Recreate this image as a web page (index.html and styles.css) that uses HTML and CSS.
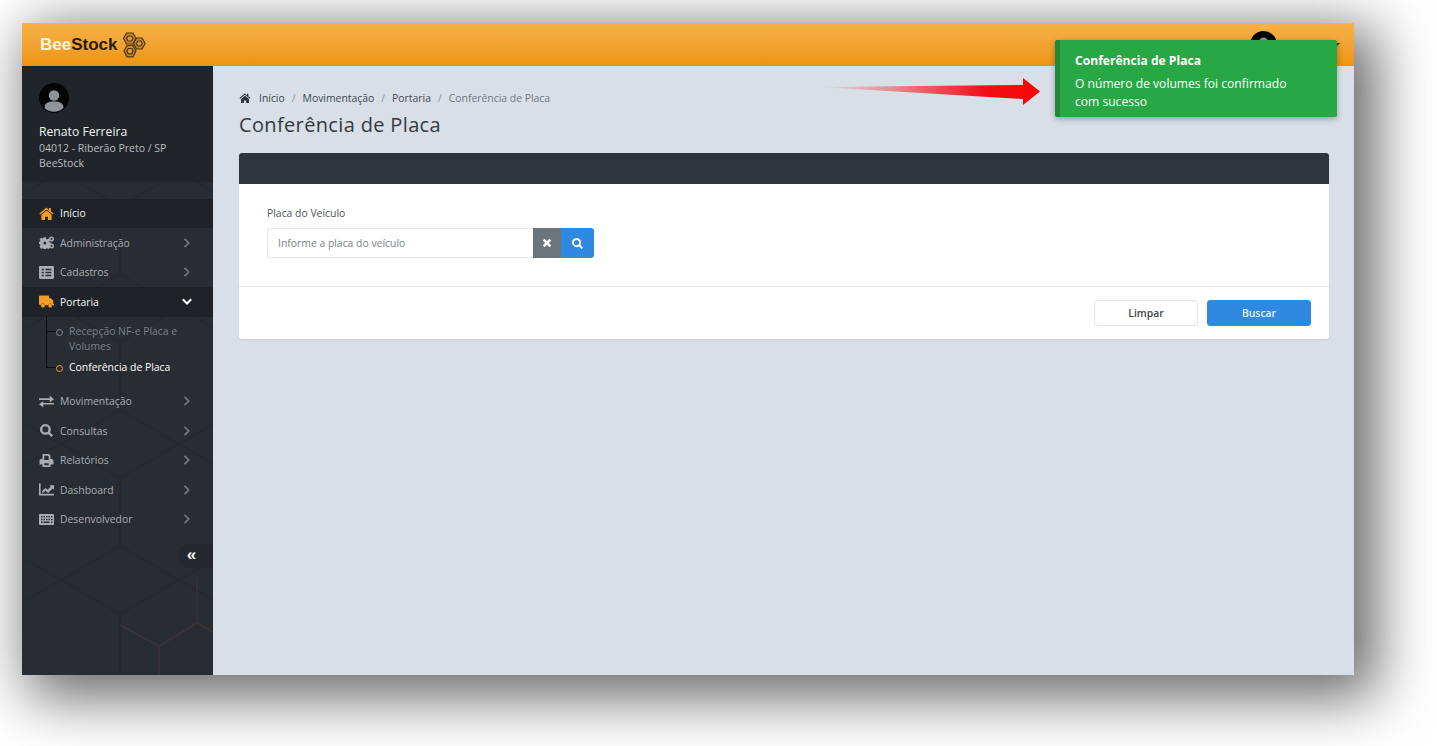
FILE: index.html
```html
<!DOCTYPE html>
<html lang="pt-BR">
<head>
    <meta charset="UTF-8">
    <title>BeeStock - Conferência de Placa</title>
    <link rel="stylesheet" href="styles.css">
</head>
<body>
    <svg class="icon-defs" width="0" height="0">
        <symbol id="i-user" viewBox="0 0 30 30">
            <circle cx="15" cy="15" r="15" fill="#050505"/>
            <circle cx="15" cy="12.5" r="5.2" fill="#8f9499"/>
            <path d="M5.5 25c0-5 3.5-6.5 9.5-6.5s9.500 1.500 9.500 6.500a14 14 0 0 1-19 0z" fill="#8f9499"/>
        </symbol>
        <symbol id="i-home" viewBox="0 0 16 14">
            <path d="M8 0.500 0.300 7l1 1.200L8 2.600l6.700 5.600 1-1.200-3-2.500V1.200h-2v2.200z"/>
            <path d="M8 3.800 2.500 8.400V14h4v-3.500h3V14h4V8.400z"/>
        </symbol>
        <symbol id="i-cogs" viewBox="0 0 16 13">
            <path d="M5 1h2.400l.3 1.700 1 .5 1.500-.9 1.600 1.600-.9 1.400.4 1.100 1.700.3v2.400l-1.700.3-.4 1 .9 1.500-1.600 1.600-1.500-.9-1 .4-.3 1.700H5l-.3-1.700-1-.4-1.500.9L.6 10.900l.9-1.500-.4-1L0 8.100V5.700l1.100-.3.400-1.100-.9-1.400 1.600-1.600 1.500.9 1-.5z"/>
            <circle cx="13.300" cy="2.700" r="1.900" fill="none" stroke="currentColor" stroke-width="1.600"/>
            <circle cx="13.300" cy="10.300" r="1.900" fill="none" stroke="currentColor" stroke-width="1.600"/>
            <circle cx="6.200" cy="6.900" r="1.600" fill="#282c33"/>
        </symbol>
        <symbol id="i-list" viewBox="0 0 14 12">
            <path fill-rule="evenodd" d="M1 0h12a1 1 0 0 1 1 1v10a1 1 0 0 1-1 1H1a1 1 0 0 1-1-1V1a1 1 0 0 1 1-1zm1.500 2.500V4h2V2.500zm0 2.800v1.500h2V5.300zm0 2.700v1.500h2V8zm3.500-5.500V4h5.500V2.500zm0 2.800v1.500h5.500V5.300zM6 8v1.500h5.500V8z"/>
        </symbol>
        <symbol id="i-truck" viewBox="0 0 16 13">
            <path d="M1.500 0h7.800A1.500 1.500 0 0 1 10.800 1.500V3h1.900l2.500 2.600V9h.8v1.500h-1.900a2.200 2.200 0 0 0-4.300 0H6.400a2.200 2.200 0 0 0-4.300 0H1.500A1.500 1.500 0 0 1 0 9V1.500A1.500 1.500 0 0 1 1.500 0z"/>
            <circle cx="4.200" cy="11" r="2"/><circle cx="11.900" cy="11" r="2"/>
        </symbol>
        <symbol id="i-exchange" viewBox="0 0 14 11">
            <path d="M0 2.500h10V0l4 3.300-4 3.200V4H0zM14 6.900H4V5L0 8.100l4 2.900V8.400h10z"/>
        </symbol>
        <symbol id="i-search" viewBox="0 0 14 14">
            <path fill-rule="evenodd" d="M5.800 0a5.800 5.800 0 0 1 4.900 8.900l3.300 3.300-1.800 1.800-3.300-3.300A5.800 5.800 0 1 1 5.800 0zm0 2.500a3.300 3.300 0 1 0 0 6.600 3.300 3.300 0 0 0 0-6.600z"/>
        </symbol>
        <symbol id="i-print" viewBox="0 0 14 13">
            <path fill-rule="evenodd" d="M3 0h6.500L11 1.500V5h1.300A1.700 1.700 0 0 1 14 6.700V10.500h-3V13H3v-2.500H0V6.700A1.700 1.700 0 0 1 1.700 5H3zm1.800 1.800V6h4.400V2.500L8.500 1.800zm0 7.400v2h4.400v-2z"/>
        </symbol>
        <symbol id="i-chart" viewBox="0 0 14 11">
            <path d="M0 0h1.500v9.500H14V11H0z"/>
            <path d="M2.500 7.500 5.800 4l2.400 1.800L11 2.800 9.700 1.500H14v4.300l-1.200-1.300-4.300 4.200L6 6.700 3.700 8.800z"/>
        </symbol>
        <symbol id="i-keyboard" viewBox="0 0 15 11">
            <path fill-rule="evenodd" d="M1 0h13a1 1 0 0 1 1 1v9a1 1 0 0 1-1 1H1a1 1 0 0 1-1-1V1a1 1 0 0 1 1-1zm1 2v1.500h1.500V2zm2.500 0v1.500H6V2zM7 2v1.500h1.500V2zm2.500 0v1.500H11V2zM12 2v1.500h1.500V2zM2 4.700v1.500h1.500V4.700zm2.500 0v1.500H6V4.700zm2.500 0v1.500h1.500V4.700zm2.500 0v1.500H11V4.700zm2.500 0v1.500h1.500V4.700zM2 7.500V9h1.500V7.500zm2.500 0V9h6V7.500zm7.500 0V9h1.500V7.500z"/>
        </symbol>
        <symbol id="i-times" viewBox="0 0 10 10">
            <path d="M0.800 2.600 2.600 0.800 5 3.200 7.400 0.800 9.200 2.600 6.800 5 9.200 7.400 7.400 9.200 5 6.800 2.600 9.200 0.800 7.400 3.200 5z"/>
        </symbol>
        <symbol id="i-right" viewBox="0 0 7 10">
            <path d="M1.500 0.800 5.700 5 1.500 9.200" fill="none" stroke="currentColor" stroke-width="1.700"/>
        </symbol>
        <symbol id="i-down" viewBox="0 0 10 7">
            <path d="M0.800 1.300 5 5.500 9.200 1.300" fill="none" stroke="currentColor" stroke-width="2"/>
        </symbol>
    </svg>

    <div class="app">
        <header class="topbar">
            <div class="logo">
                <span class="logo-text"><span class="logo-bee">Bee</span>Stock</span>
                <svg class="logo-mark" viewBox="0 0 26 26" fill="#c8862a" stroke="#4a3413" stroke-width="1.200">
                    <path d="M6.500 1 13 1 16 6.500 13 12 6.500 12 3.500 6.500z"/>
                    <path d="M16.500 6 22 6 25.200 11.500 22 17 16.500 17 13.500 11.500z"/>
                    <path d="M7 13.500 13 13.500 16 19 13 24.800 7 24.800 4 19z"/>
                    <path d="M8 4 11.500 4 13 6.500 11.500 9 8 9 6.500 6.500z" fill="#dd9a3a"/>
                    <path d="M17.800 9 20.800 9 22.300 11.500 20.800 14 17.800 14 16.300 11.500z" fill="#dd9a3a"/>
                    <path d="M8.300 16.500 11.700 16.500 13.200 19 11.700 21.800 8.300 21.800 6.800 19z" fill="#dd9a3a"/>
                </svg>
            </div>
            <div class="top-user">
                <svg class="top-avatar"><use href="#i-user"/></svg>
                <span class="top-caret"></span>
            </div>
        </header>

        <div class="main">
            <aside class="sidebar">
                <svg class="hex-bg" width="191" height="609">
                    <defs>
                        <pattern id="hex" width="118" height="136" patternUnits="userSpaceOnUse" x="-20" y="-30">
                            <path d="M59 0 118 34V102L59 136 0 102V34z" fill="none" stroke="#000000" stroke-opacity=".07" stroke-width="2"/>
                        </pattern>
                    </defs>
                    <rect width="191" height="609" fill="url(#hex)"/>
                    <path d="M175 510V557L137 580V609M137 580 98 559M175 557 191 566" fill="none" stroke="#5a3f3a" stroke-opacity=".4" stroke-width="1.500"/>
                </svg>

                <div class="profile">
                    <svg class="avatar"><use href="#i-user"/></svg>
                    <div class="profile-name">Renato Ferreira</div>
                    <div class="profile-info">04012 - Riberão Preto / SP<br>BeeStock</div>
                </div>

                <nav class="menu">
                    <a class="menu-item active-home"><svg class="menu-icon"><use href="#i-home"/></svg><span>Início</span></a>
                    <a class="menu-item"><svg class="menu-icon"><use href="#i-cogs"/></svg><span>Administração</span><svg class="chevron"><use href="#i-right"/></svg></a>
                    <a class="menu-item"><svg class="menu-icon"><use href="#i-list"/></svg><span>Cadastros</span><svg class="chevron"><use href="#i-right"/></svg></a>
                    <a class="menu-item open"><svg class="menu-icon"><use href="#i-truck"/></svg><span>Portaria</span><svg class="chevron-down"><use href="#i-down"/></svg></a>
                    <ul class="submenu">
                        <li>Recepção NF-e Placa e Volumes</li>
                        <li class="current">Conferência de Placa</li>
                    </ul>
                    <a class="menu-item"><svg class="menu-icon"><use href="#i-exchange"/></svg><span>Movimentação</span><svg class="chevron"><use href="#i-right"/></svg></a>
                    <a class="menu-item"><svg class="menu-icon"><use href="#i-search"/></svg><span>Consultas</span><svg class="chevron"><use href="#i-right"/></svg></a>
                    <a class="menu-item"><svg class="menu-icon"><use href="#i-print"/></svg><span>Relatórios</span><svg class="chevron"><use href="#i-right"/></svg></a>
                    <a class="menu-item"><svg class="menu-icon"><use href="#i-chart"/></svg><span>Dashboard</span><svg class="chevron"><use href="#i-right"/></svg></a>
                    <a class="menu-item"><svg class="menu-icon"><use href="#i-keyboard"/></svg><span>Desenvolvedor</span><svg class="chevron"><use href="#i-right"/></svg></a>
                </nav>

                <div class="collapse-row"><button class="collapse-btn">«</button></div>
            </aside>

            <main class="content">
                <div class="breadcrumb">
                    <svg class="crumb-home"><use href="#i-home"/></svg>
                    <span>Início</span><i>/</i><span>Movimentação</span><i>/</i><span>Portaria</span><i>/</i><span class="crumb-last">Conferência de Placa</span>
                </div>
                <h1 class="page-title">Conferência de Placa</h1>

                <section class="card">
                    <div class="card-head"></div>
                    <div class="card-body">
                        <label class="field-label">Placa do Veículo</label>
                        <div class="input-row">
                            <input class="plate-input" type="text" placeholder="Informe a placa do veículo">
                            <button class="btn-clear"><svg class="btn-icon-x"><use href="#i-times"/></svg></button>
                            <button class="btn-search"><svg class="btn-icon"><use href="#i-search"/></svg></button>
                        </div>
                    </div>
                    <div class="card-foot">
                        <button class="btn btn-light">Limpar</button>
                        <button class="btn btn-blue">Buscar</button>
                    </div>
                </section>
            </main>
        </div>
    </div>

    <!-- seta vermelha apontando para o aviso -->
    <svg class="arrow" width="222" height="30" viewBox="0 0 222 30">
        <defs>
            <linearGradient id="arrowFill" x1="0" x2="1" y1="0" y2="0">
                <stop offset="0" stop-color="#d8dfe7"/>
                <stop offset=".25" stop-color="#e5a0a6"/>
                <stop offset=".75" stop-color="#ee0f18"/>
                <stop offset="1" stop-color="#f90404"/>
            </linearGradient>
        </defs>
        <path d="M0 10 203 8V1L220 14.500 203 28V22z" fill="url(#arrowFill)"/>
    </svg>

    <div class="toast">
        <div class="toast-title">Conferência de Placa</div>
        <div class="toast-text">O número de volumes foi confirmado com sucesso</div>
    </div>
</body>
</html>
```

FILE: styles.css
```css
* {
    box-sizing: border-box;
}
html, body {
    margin: 0;
    height: 746px;
    overflow: hidden;
}
body {
    background: #fff;
    font-family: "Open Sans", "Noto Sans", sans-serif;
    padding: 23px 22px;
}
.icon-defs {
    position: absolute;
}
.app {
    width: 1332px;
    height: 652px;
    display: flex;
    flex-direction: column;
    box-shadow: 14px 14px 55px 8px rgba(0, 0, 0, .6);
}

/* topo */
.topbar {
    height: 43px;
    flex: none;
    display: flex;
    align-items: center;
    justify-content: space-between;
    padding: 0 14px 0 18px;
    background: linear-gradient(to bottom, #f6b149 0%, #f2a433 50%, #ee930f 100%);
}
.logo {
    display: flex;
    align-items: center;
    gap: 3px;
}
.logo-text {
    font-family: "Liberation Sans", Arial, sans-serif;
    font-weight: bold;
    font-size: 17px;
    color: #2a1b08;
}
.logo-bee {
    color: #fff5d9;
}
.logo-mark {
    width: 26px;
    height: 26px;
}
.top-user {
    display: flex;
    align-items: flex-start;
    gap: 55px;
    height: 24px;
}
.top-avatar {
    width: 27px;
    height: 27px;
    margin-top: -2px;
}
.top-caret {
    width: 0;
    height: 0;
    border-left: 4px solid transparent;
    border-right: 4px solid transparent;
    border-top: 4px solid #333;
    margin-top: 10px;
}

.main {
    flex: 1;
    display: flex;
    min-height: 0;
}

/* menu lateral */
.sidebar {
    width: 191px;
    flex: none;
    position: relative;
    background: #282c33;
    color: #a9adb2;
    font-size: 10.400px;
}
.hex-bg {
    position: absolute;
    left: 0;
    top: 0;
}
.profile {
    position: relative;
    height: 116px;
    padding: 17px 0 0 17px;
    background: #212529;
}
.avatar {
    width: 30px;
    height: 30px;
    display: block;
}
.profile-name {
    margin-top: 10px;
    font-size: 12.200px;
    line-height: 18px;
    color: #f1f2f3;
}
.profile-info {
    margin-top: 0;
    font-size: 10.500px;
    line-height: 15px;
    color: #b9bcc0;
}
.menu {
    position: relative;
    padding-top: 16.500px;
}
.menu-item {
    height: 29.500px;
    display: flex;
    align-items: center;
    padding-left: 17px;
    color: #a9adb2;
    font-size: 10.400px;
}
.menu-item span {
    flex: 1;
    margin-left: 6px;
}
.menu-icon {
    width: 15px;
    height: 13px;
    fill: currentColor;
    flex: none;
}
.chevron {
    width: 7px;
    height: 10px;
    margin-right: 23px;
    color: #767a80;
}
.chevron-down {
    width: 10px;
    height: 7px;
    margin-right: 21px;
    color: #fff;
}
.active-home,
.open {
    background: #1f2226;
    color: #f4f4f4;
}
.active-home .menu-icon,
.open .menu-icon {
    color: #f59e27;
}
.submenu {
    list-style: none;
    margin: 0;
    padding: 7px 20px 12px 47px;
    font-size: 10.400px;
    line-height: 15px;
    color: #7d8187;
}
.submenu li {
    position: relative;
    margin-bottom: 6px;
}
.submenu li:last-child {
    margin-bottom: 0;
}
.submenu li.current {
    color: #fff;
    font-weight: 500;
}
/* linha da árvore e bolinha */
.submenu li::before {
    content: "";
    position: absolute;
    left: -23px;
    bottom: calc(100% - 8px);
    height: 60px;
    width: 9px;
    border-left: 1px solid #0c0d0f;
    border-bottom: 1px solid #0c0d0f;
}
.submenu li:first-child::before {
    height: 15px;
}
.submenu li.current::before {
    height: 36px;
}
.submenu li::after {
    content: "";
    position: absolute;
    left: -13px;
    top: 5px;
    width: 5px;
    height: 5px;
    border-radius: 50%;
    border: 1px solid #85898e;
}
.submenu li.current::after {
    border-color: #f59e27;
}
.collapse-row {
    position: relative;
    display: flex;
    justify-content: flex-end;
    margin-top: 10px;
}
.collapse-btn {
    width: 35px;
    height: 24px;
    border: 0;
    padding: 0 8px 3px 0;
    border-radius: 12px 0 0 12px;
    background: #24282e;
    color: #fff;
    font-family: "Liberation Sans", sans-serif;
    font-size: 17px;
    font-weight: bold;
    line-height: 19px;
}

/* conteúdo */
.content {
    flex: 1;
    background: #d8dfe7;
    padding: 25px 25px 0 26px;
    min-width: 0;
}
.breadcrumb {
    display: flex;
    align-items: center;
    height: 14px;
    font-size: 10.400px;
    color: #41464d;
}
.breadcrumb i {
    font-style: normal;
    color: #8e959c;
    margin: 0 7px;
}
.crumb-home {
    width: 12px;
    height: 10px;
    fill: #2e3338;
    margin-right: 8px;
}
.crumb-last {
    color: #70777e;
}
.page-title {
    margin: 6px 0 0;
    font-size: 20px;
    font-weight: 400;
    line-height: 28px;
    letter-spacing: .35px;
    color: #343a40;
}
.card {
    margin-top: 14px;
    background: #fff;
    border-radius: 3px;
    box-shadow: 0 1px 2px rgba(0, 0, 0, .06);
}
.card-head {
    height: 31px;
    background: #2d343c;
    border-radius: 3px 3px 0 0;
}
.card-body {
    height: 103px;
    padding: 22px 28px 0;
    border-bottom: 1px solid #e2e6eb;
}
.field-label {
    display: block;
    font-size: 10.400px;
    line-height: 15px;
    color: #4d5258;
    margin-bottom: 7px;
}
.input-row {
    display: flex;
    height: 30px;
}
.plate-input {
    width: 266px;
    height: 30px;
    border: 1px solid #e3e6ea;
    border-right: 0;
    border-radius: 3px 0 0 3px;
    padding: 0 10px;
    font-family: inherit;
    font-size: 10.400px;
    background: #fff;
}
.plate-input::placeholder {
    color: #7a7f85;
    opacity: 1;
}
.btn-clear,
.btn-search {
    border: 0;
    padding: 0;
    color: #fff;
    display: flex;
    align-items: center;
    justify-content: center;
}
.btn-clear {
    width: 28px;
    background: #6c757d;
}
.btn-search {
    width: 33px;
    background: #2f89e0;
    border-radius: 0 3px 3px 0;
}
.btn-icon-x {
    width: 10px;
    height: 10px;
    fill: #fff;
}
.btn-icon {
    width: 11px;
    height: 11px;
    fill: #fff;
}
.card-foot {
    height: 52px;
    display: flex;
    justify-content: flex-end;
    align-items: center;
    gap: 9px;
    padding-right: 18px;
}
.btn {
    width: 104px;
    height: 26px;
    border-radius: 3px;
    font-family: inherit;
    font-size: 10.400px;
    font-weight: 600;
}
.btn-light {
    background: #fff;
    border: 1px solid #e3e6ea;
    color: #3f444a;
}
.btn-blue {
    background: #2f89e0;
    border: 1px solid #2f89e0;
    color: #e8f2fc;
}

/* sobreposições */
.arrow {
    position: absolute;
    left: 820px;
    top: 77px;
}
.toast {
    position: absolute;
    left: 1055px;
    top: 40px;
    width: 282px;
    height: 77px;
    padding: 13px 30px 0 15px;
    background: #28a745;
    border-left: 5px solid #1e8a38;
    border-radius: 2px;
    color: #fff;
    box-shadow: 0 2px 6px rgba(0, 0, 0, .3);
    font-size: 12.100px;
}
.toast-title {
    font-weight: 700;
    line-height: 16px;
    margin-bottom: 6px;
}
.toast-text {
    line-height: 18px;
    font-size: 12.100px;
}
```
